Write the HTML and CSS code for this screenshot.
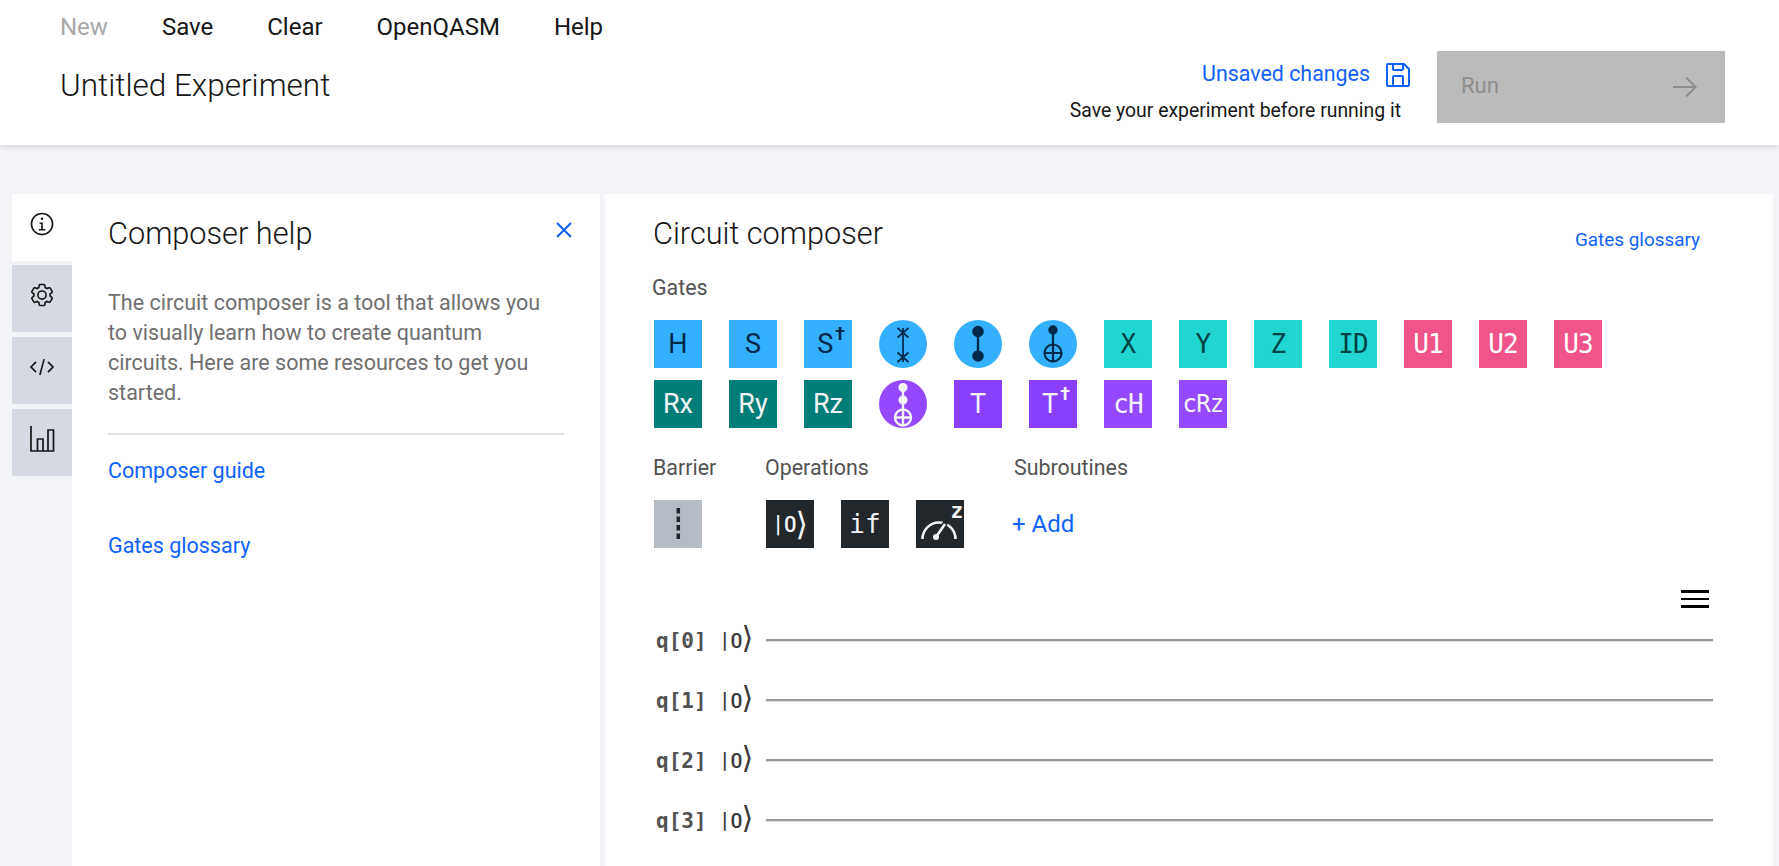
FILE: index.html
```html
<!DOCTYPE html>
<html lang="en">
<head>
<meta charset="utf-8">
<title>Untitled Experiment</title>
<link rel="stylesheet" href="styles.css">
</head>
<body>
<header class="topbar">
  <div class="topbar-left">
    <nav class="menu">
      <span class="menu-item is-disabled">New</span>
      <span class="menu-item">Save</span>
      <span class="menu-item">Clear</span>
      <span class="menu-item">OpenQASM</span>
      <span class="menu-item">Help</span>
    </nav>
    <h1 class="exp-title">Untitled Experiment</h1>
  </div>
  <div class="topbar-right">
    <div class="status">
      <div class="status-line">
        <span class="status-link">Unsaved changes</span>
        <svg class="save-icon" viewBox="0 0 32 32"><path d="M27.71,9.29l-5-5A1,1,0,0,0,22,4H6A2,2,0,0,0,4,6V26a2,2,0,0,0,2,2H26a2,2,0,0,0,2-2V10A1,1,0,0,0,27.71,9.29ZM12,6h8v4H12Zm8,20H12V18h8Zm2,0V18a2,2,0,0,0-2-2H12a2,2,0,0,0-2,2v8H6V6h4v4a2,2,0,0,0,2,2h8a2,2,0,0,0,2-2V6.41l4,4V26Z"/></svg>
      </div>
      <div class="status-note">Save your experiment before running it</div>
    </div>
    <div class="run-btn">
      <span class="run-label">Run</span>
      <svg class="run-arrow" viewBox="0 0 32 32"><path d="M18 6l-1.43 1.39L24.15 15H4v2h20.15l-7.58 7.61L18 26l10-10z"/></svg>
    </div>
  </div>
</header>

<main class="workspace">
  <div class="rail">
    <div class="tab is-active">
      <svg class="tab-icon" viewBox="0 0 32 32"><path d="M17 22v-8h-4v2h2v6h-3v2h8v-2z"/><path d="M16 8a1.5 1.5 0 1 0 1.5 1.5A1.5 1.5 0 0 0 16 8z"/><path d="M16 30a14 14 0 1 1 14-14 14 14 0 0 1-14 14zm0-26a12 12 0 1 0 12 12A12 12 0 0 0 16 4z"/></svg>
    </div>
    <div class="tab">
      <svg class="tab-icon" viewBox="0 0 32 32"><path d="M27,16.76c0-.25,0-.5,0-.76s0-.51,0-.77l1.92-1.68A2,2,0,0,0,29.3,11L26.94,7a2,2,0,0,0-1.73-1,2,2,0,0,0-.64.1l-2.43.82a11.35,11.35,0,0,0-1.31-.75l-.51-2.52a2,2,0,0,0-2-1.61H13.64a2,2,0,0,0-2,1.61l-.51,2.52a11.48,11.48,0,0,0-1.32.75L7.43,6.06A2,2,0,0,0,6.79,6,2,2,0,0,0,5.06,7L2.7,11a2,2,0,0,0,.41,2.51L5,15.24c0,.25,0,.5,0,.76s0,.51,0,.77L3.11,18.45A2,2,0,0,0,2.7,21L5.06,25a2,2,0,0,0,1.73,1,2,2,0,0,0,.64-.1l2.43-.82a11.35,11.35,0,0,0,1.31.75l.51,2.52a2,2,0,0,0,2,1.61h4.72a2,2,0,0,0,2-1.61l.51-2.52a11.48,11.48,0,0,0,1.32-.75l2.42.82a2,2,0,0,0,.64.1,2,2,0,0,0,1.73-1L29.3,21a2,2,0,0,0-.41-2.51ZM25.21,24l-3.43-1.16a8.86,8.86,0,0,1-2.71,1.57L18.36,28H13.64l-.71-3.55a9.36,9.36,0,0,1-2.7-1.57L6.79,24,4.43,20l2.72-2.4a8.9,8.9,0,0,1,0-3.13L4.43,12,6.79,8l3.43,1.16a8.86,8.86,0,0,1,2.71-1.57L13.64,4h4.72l.71,3.55a9.36,9.36,0,0,1,2.7,1.57L25.21,8,27.57,12l-2.72,2.4a8.9,8.9,0,0,1,0,3.13L27.57,20Z"/><path d="M16,22a6,6,0,1,1,6-6A5.94,5.94,0,0,1,16,22Zm0-10a3.91,3.91,0,0,0-4,4,3.91,3.91,0,0,0,4,4,3.91,3.91,0,0,0,4-4A3.91,3.91,0,0,0,16,12Z"/></svg>
    </div>
    <div class="tab">
      <svg class="tab-icon" viewBox="0 0 32 32"><path d="M31 16l-7 7-1.41-1.41L28.17 16l-5.58-5.59L24 9l7 7z"/><path d="M1 16l7-7 1.41 1.41L3.83 16l5.58 5.59L8 23l-7-7z"/><path d="M12.419 25.484L17.639 6l1.932.518L14.35 26z"/></svg>
    </div>
    <div class="tab">
      <svg class="tab-icon tab-icon-chart" viewBox="0 0 26 26" fill="none"><path d="M2 0v25h23.5M8.5 25V13h5.5v12M19 25V4h5.5v21"/></svg>
    </div>
  </div>

  <aside class="help">
    <div class="help-head">
      <h2 class="panel-title">Composer help</h2>
      <svg class="close-icon" viewBox="0 0 16 16"><path d="M1 1l14 14M15 1L1 15"/></svg>
    </div>
    <p class="help-text">The circuit composer is a tool that allows you to visually learn how to create quantum circuits. Here are some resources to get you started.</p>
    <div class="help-links">
      <a class="help-link">Composer guide</a>
      <a class="help-link">Gates glossary</a>
    </div>
  </aside>

  <section class="composer">
    <div class="composer-head">
      <h2 class="panel-title">Circuit composer</h2>
      <a class="glossary">Gates glossary</a>
    </div>
    <div class="section-label">Gates</div>
    <div class="gates">
      <div class="gate blue sans">H</div>
      <div class="gate blue sans">S</div>
      <div class="gate blue sans">S<span class="dag">†</span></div>
      <div class="gate blue round"><svg class="gate-svg" viewBox="0 0 48 48" fill="none" stroke="#012749" stroke-width="1.7"><path d="M24 8v34M18.5 8l11 9.5M29.5 8l-11 9.5M18.5 32.5l11 9.5M29.5 32.5l-11 9.5"/></svg></div>
      <div class="gate blue round"><svg class="gate-svg" viewBox="0 0 48 48" fill="#012749" stroke="#012749" stroke-width="2.4"><path d="M24 12v24"/><circle cx="24" cy="11.5" r="4.6"/><circle cx="24" cy="36" r="4.6"/></svg></div>
      <div class="gate blue round"><svg class="gate-svg" viewBox="0 0 48 48" fill="none" stroke="#012749" stroke-width="2.2"><circle cx="24" cy="10" r="3.6" fill="#012749"/><path d="M24 10v31.5M15.5 33h17"/><circle cx="24" cy="33" r="8.5"/></svg></div>
      <div class="gate cyan mono">X</div>
      <div class="gate cyan mono">Y</div>
      <div class="gate cyan mono">Z</div>
      <div class="gate cyan mono">ID</div>
      <div class="gate pink mono">U1</div>
      <div class="gate pink mono">U2</div>
      <div class="gate pink mono">U3</div>

      <div class="gate teal sans">Rx</div>
      <div class="gate teal sans">Ry</div>
      <div class="gate teal sans">Rz</div>
      <div class="gate violet round"><svg class="gate-svg" viewBox="0 0 48 48" fill="none" stroke="#f2f4f8" stroke-width="2.4"><circle cx="24" cy="7.5" r="3.4" fill="#f2f4f8"/><circle cx="24" cy="20" r="3.4" fill="#f2f4f8"/><path d="M24 7.5v38M16 37.5h16"/><circle cx="24" cy="37.5" r="8"/></svg></div>
      <div class="gate purple sans">T</div>
      <div class="gate purple sans">T<span class="dag">†</span></div>
      <div class="gate violet mono">cH</div>
      <div class="gate violet mono tight">cRz</div>
    </div>

    <div class="tools">
      <div class="tool-barrier">
        <div class="section-label">Barrier</div>
        <div class="gate grey"><svg class="gate-svg" viewBox="0 0 48 48" fill="none" stroke="#21272a" stroke-width="3.5"><path d="M24.3 8v33" stroke-dasharray="5.5 3"/></svg></div>
      </div>
      <div class="tool-ops">
        <div class="section-label">Operations</div>
        <div class="ops-row">
          <div class="gate dark op-ket"><span class="ket-bar">|</span>0<span class="ket-close">⟩</span></div>
          <div class="gate dark op-text">if</div>
          <div class="gate dark"><svg class="gate-svg" viewBox="0 0 48 48" fill="none" stroke="#f2f4f8" stroke-width="2.6"><path d="M6.5 39a16.5 16.5 0 0 1 33 0"/><path d="M20 37l10-15" stroke="#21272a" stroke-width="5"/><path d="M20 37l9-13"/><circle cx="20" cy="37" r="3" fill="#f2f4f8" stroke="none"/><text class="measure-z" x="34.5" y="18" fill="#f2f4f8" stroke="none">z</text></svg></div>
        </div>
      </div>
      <div class="tool-subs">
        <div class="section-label">Subroutines</div>
        <a class="add-link">+ Add</a>
      </div>
    </div>

    <div class="circuit">
      <div class="circuit-menu"><span class="burger"></span></div>
      <div class="qubit"><span class="q-name">q[0]</span><span class="q-ket"><span class="ket-bar">|</span>0<span class="ket-close">⟩</span></span><span class="q-line"></span></div>
      <div class="qubit"><span class="q-name">q[1]</span><span class="q-ket"><span class="ket-bar">|</span>0<span class="ket-close">⟩</span></span><span class="q-line"></span></div>
      <div class="qubit"><span class="q-name">q[2]</span><span class="q-ket"><span class="ket-bar">|</span>0<span class="ket-close">⟩</span></span><span class="q-line"></span></div>
      <div class="qubit"><span class="q-name">q[3]</span><span class="q-ket"><span class="ket-bar">|</span>0<span class="ket-close">⟩</span></span><span class="q-line"></span></div>
    </div>
  </section>
</main>
</body>
</html>
```
FILE: styles.css
```css
* { box-sizing: border-box; }
html, body { margin: 0; height: 100%; }
body {
  background: #f2f4f8;
  color: #161616;
  font-family: Roboto, "Liberation Sans", sans-serif;
  overflow: hidden;
  display: flex;
  flex-direction: column;
}
h1, h2, p { margin: 0; font-weight: 400; }

.topbar {
  height: 145px;
  flex: none;
  background: #fff;
  box-shadow: 0 2px 6px rgba(0, 0, 0, .12);
  display: flex;
  justify-content: space-between;
  padding: 0 54px 0 60px;
}
.menu { display: flex; gap: 54px; height: 54px; align-items: center; font-size: 24px; }
.menu-item { line-height: 28px; }
.is-disabled { color: #a8a8a8; }
.exp-title { font-size: 31.5px; line-height: 36px; margin-top: 14px; font-weight: 300; }

.topbar-right { display: flex; align-items: flex-start; gap: 36px; padding-top: 51px; }
.status { display: flex; flex-direction: column; align-items: flex-end; }
.status-line { display: flex; align-items: center; gap: 12px; height: 26px; margin-top: 11px; }
.status-link { color: #0f62fe; font-size: 21.4px; line-height: 26px; margin-bottom: 2px; }
.save-icon { width: 32px; height: 32px; fill: #0f62fe; margin-right: -13px; }
.status-note { font-size: 19.4px; line-height: 24px; margin-top: 11px; }
.run-btn {
  width: 288px;
  height: 72px;
  background: #bbb;
  color: #8d8d8d;
  font-size: 22px;
  display: flex;
  align-items: center;
  justify-content: space-between;
  padding: 0 24px;
}
.run-label { margin-bottom: 3px; }
.run-arrow { width: 32px; height: 32px; fill: #8d8d8d; }

.workspace { flex: 1; display: flex; padding: 49px 6px 0 12px; min-height: 0; }
.rail { width: 60px; flex: none; display: flex; flex-direction: column; }
.tab {
  height: 67px;
  margin-bottom: 5px;
  padding-bottom: 7px;
  background: #d5d9e1;
  display: flex;
  align-items: center;
  justify-content: center;
}
.tab.is-active { background: #fff; margin-bottom: 4px; }
.tab-icon { width: 26px; height: 26px; fill: #161616; }
.tab-icon-chart { fill: none; stroke: #161616; stroke-width: 1.7; }

.help { width: 528px; flex: none; background: #fff; padding: 0 36px; }
.help-head { display: flex; justify-content: space-between; align-items: center; height: 78px; }
.panel-title { font-size: 30.7px; line-height: 36px; font-weight: 300; margin-top: 2px; }
.close-icon { width: 16px; height: 16px; stroke: #0f62fe; stroke-width: 2; fill: none; margin: -6px -8px 0 0; }
.help-text {
  margin-top: 16px;
  font-size: 21.5px;
  line-height: 30px;
  color: #6f6f6f;
  padding: 0 12px 25px 0;
  border-bottom: 2px solid #e0e0e0;
}
.help-links { display: flex; flex-direction: column; gap: 45px; margin-top: 21px; }
.help-link { color: #0f62fe; font-size: 21.5px; line-height: 30px; }

.composer { flex: 1; margin-left: 5px; background: #fff; padding: 0 0 0 48px; min-width: 0; }
.composer-head { display: flex; justify-content: space-between; align-items: center; height: 78px; padding-right: 73px; }
.glossary { color: #0f62fe; font-size: 18.9px; line-height: 24px; margin-top: 14px; }
.section-label { font-size: 21.4px; line-height: 26px; color: #525252; margin-left: -1px; }
.composer-head + .section-label { margin-top: 3px; }

.gates {
  display: grid;
  grid-template-columns: repeat(13, 48px);
  grid-auto-rows: 48px;
  gap: 12px 27px;
  margin: 19px 0 0 1px;
}
.gate {
  width: 48px;
  height: 48px;
  display: flex;
  align-items: center;
  justify-content: center;
  flex: none;
}
.round { border-radius: 50%; }
.blue { background: #33b1ff; color: #012749; }
.cyan { background: #20d5d2; color: #004144; }
.pink { background: #f1538b; color: #fff; }
.teal { background: #007d79; color: #f2f4f8; }
.purple { background: #8a3ffc; color: #f2f4f8; }
.violet { background: #9549ff; color: #f2f4f8; }
.grey { background: #b6bcc6; }
.dark { background: #21272a; color: #f2f4f8; }
.sans { font-size: 27px; }
.mono { font-family: "DejaVu Sans Mono", "Liberation Mono", monospace; font-size: 26px; letter-spacing: -.8px; }
.tight { font-size: 24px; letter-spacing: -.8px; }
.dag { font-size: 18px; font-weight: 700; align-self: flex-start; line-height: 28px; margin-right: -6px; margin-left: 2px; }
.gate-svg { width: 48px; height: 48px; display: block; }
.op-text { font-family: "DejaVu Sans Mono", "Liberation Mono", monospace; font-size: 26px; }
.op-ket { font-size: 22px; font-weight: 500; }
.ket-bar { font-size: 1.05em; margin-right: 3px; }
.ket-close { font-family: "DejaVu Sans", sans-serif; font-weight: 400; font-size: 1.45em; line-height: 0; margin: 0 -3px 0 -1px; }
.measure-z { font-family: "DejaVu Sans Mono", monospace; font-size: 21px; font-weight: 700; }

.tools { display: flex; margin-top: 27px; }
.tool-barrier { width: 113px; padding-left: 1px; }
.tool-barrier .section-label, .tool-ops .section-label, .tool-subs .section-label { height: 26px; margin-bottom: 19px; }
.tool-ops { width: 249px; }
.ops-row { display: flex; gap: 27px; }
.add-link { display: block; color: #0f62fe; font-size: 24px; line-height: 48px; margin-left: -3px; }

.circuit { margin-top: 30px; width: 1060px; }
.circuit-menu { display: flex; justify-content: flex-end; height: 32px; padding-right: 4px; padding-top: 12px; }
.burger {
  width: 28px;
  height: 18px;
  border-top: 3px solid #000;
  border-bottom: 3px solid #000;
  position: relative;
}
.burger::after {
  content: "";
  position: absolute;
  left: 0;
  right: 0;
  top: 5px;
  height: 2px;
  background: #000;
}
.qubit { display: flex; align-items: center; height: 60px; }
.q-name { width: 68px; padding: 2px 0 0 3px; font-family: "DejaVu Sans Mono", monospace; font-weight: 700; font-size: 21px; color: #525252; }
.q-ket { width: 45px; padding-left: 1px; font-size: 21px; font-weight: 500; color: #393939; white-space: nowrap; }
.q-line { flex: 1; height: 2px; background: #999; box-shadow: 0 1px 0 #e0e0e0; }
```
